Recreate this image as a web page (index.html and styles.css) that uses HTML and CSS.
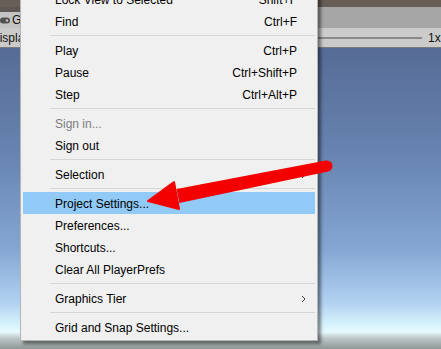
FILE: index.html
```html
<!DOCTYPE html>
<html lang="en">
<head>
    <meta charset="UTF-8">
    <meta name="viewport" content="width=device-width, initial-scale=1.0">
    <title>Edit menu</title>
    <link rel="stylesheet" href="styles.css">
</head>
<body>
    <div class="editor">
        <div class="titlebar"></div>
        <div class="tabbar">
            <div class="tab">
                <svg class="tab-icon" width="10" height="7" viewBox="0 0 10 7">
                    <rect x="0" y="0.5" width="10" height="6" rx="3" fill="#505050"/>
                    <circle cx="7" cy="3.5" r="1.2" fill="#c4c4c4"/>
                </svg>
                <span>Game</span>
            </div>
        </div>
        <div class="toolbar">
            <span class="display">Display 1</span>
            <div class="scale">
                <div class="track"></div>
                <span>1x</span>
            </div>
        </div>
        <div class="view"></div>
    </div>

    <div class="menu">
        <div class="item"><span class="label">Lock View to Selected</span><span class="key">Shift+F</span></div>
        <div class="item"><span class="label">Find</span><span class="key">Ctrl+F</span></div>
        <div class="sep"></div>
        <div class="item"><span class="label">Play</span><span class="key">Ctrl+P</span></div>
        <div class="item"><span class="label">Pause</span><span class="key">Ctrl+Shift+P</span></div>
        <div class="item"><span class="label">Step</span><span class="key">Ctrl+Alt+P</span></div>
        <div class="sep"></div>
        <div class="item disabled"><span class="label">Sign in...</span></div>
        <div class="item"><span class="label">Sign out</span></div>
        <div class="sep"></div>
        <div class="item"><span class="label">Selection</span>
            <svg class="chevron" width="5" height="8" viewBox="0 0 5 8"><path d="M1 1 L4 4 L1 7" fill="none" stroke="#3a3a3a" stroke-width="1"/></svg>
        </div>
        <div class="sep"></div>
        <div class="item active"><span class="label">Project Settings...</span></div>
        <div class="item"><span class="label">Preferences...</span></div>
        <div class="item"><span class="label">Shortcuts...</span></div>
        <div class="item"><span class="label">Clear All PlayerPrefs</span></div>
        <div class="sep"></div>
        <div class="item"><span class="label">Graphics Tier</span>
            <svg class="chevron" width="5" height="8" viewBox="0 0 5 8"><path d="M1 1 L4 4 L1 7" fill="none" stroke="#3a3a3a" stroke-width="1"/></svg>
        </div>
        <div class="sep"></div>
        <div class="item"><span class="label">Grid and Snap Settings...</span></div>
    </div>

    <!-- annotation arrow drawn over the screenshot -->
    <svg class="arrow" width="441" height="349" viewBox="0 0 441 349">
        <polygon points="328.1,171.4 325.9,160.6 176.6,189.1 179.4,202.9" fill="#f50000"/>
        <circle cx="327" cy="166" r="5.5" fill="#f50000"/>
        <polygon points="148,201 174,182 179,209" fill="#f50000" stroke="#f50000" stroke-width="2" stroke-linejoin="round"/>
    </svg>
</body>
</html>
```

FILE: styles.css
```css
body {
    margin: 0;
    width: 441px;
    height: 349px;
    overflow: hidden;
    position: relative;
    font-family: "Liberation Sans", Arial, sans-serif;
    font-size: 12px;
    color: #111;
}

.editor {
    display: flex;
    flex-direction: column;
    height: 349px;
}

.titlebar {
    height: 7px;
    background-color: #675e57;
}

.tabbar {
    height: 21px;
    display: flex;
    background-color: #a6a6a6;
}

.tab {
    display: flex;
    align-items: center;
    gap: 2px;
    height: 16px;
    padding: 0 6px 0 0;
    border-top: 5px solid #5d5853;
    background-color: #c4c4c4;
}

.tab-icon {
    display: block;
}

.toolbar {
    height: 19px;
    display: flex;
    align-items: center;
    background-color: #cbcbcb;
    border-bottom: 1px solid #7a7a7a;
}

.display {
    margin-left: -9px;
}

.scale {
    margin-left: auto;
    display: flex;
    align-items: center;
    gap: 6px;
    margin-right: -1px;
}

.scale span {
    width: 14px;
}

.track {
    width: 130px;
    height: 2px;
    background-color: #8a8a8a;
}

.view {
    flex: 1;
    background: linear-gradient(to bottom,
        #566c97 0px,
        #6682ae 100px,
        #84a5d2 200px,
        #b1d2f1 255px,
        #d6f2fc 276px,
        #e6fbff 284px,
        #bfc8c9 290px,
        #8f9797 301px);
}

.menu {
    position: absolute;
    left: 20px;
    top: -15px;
    width: 298px;
    box-sizing: border-box;
    padding: 2px;
    background-color: #f0f0f0;
    border: 1px solid #b4b4b4;
    box-shadow: 3px 3px 3px rgba(0, 0, 0, 0.45);
}

.item {
    height: 22px;
    box-sizing: border-box;
    display: flex;
    align-items: center;
    padding: 2px 18px 0 32px;
    color: #000;
}

.item .label {
    flex: 1;
}

.item.disabled {
    color: #7d7d7d;
}

.item.active {
    background-color: #91c9f7;
}

.chevron {
    display: block;
    margin-right: -9px;
}

.sep {
    height: 1px;
    margin: 3px 0 3px 27px;
    background-color: #d5d5d5;
}

.arrow {
    position: absolute;
    left: 0;
    top: 0;
    pointer-events: none;
}
```
